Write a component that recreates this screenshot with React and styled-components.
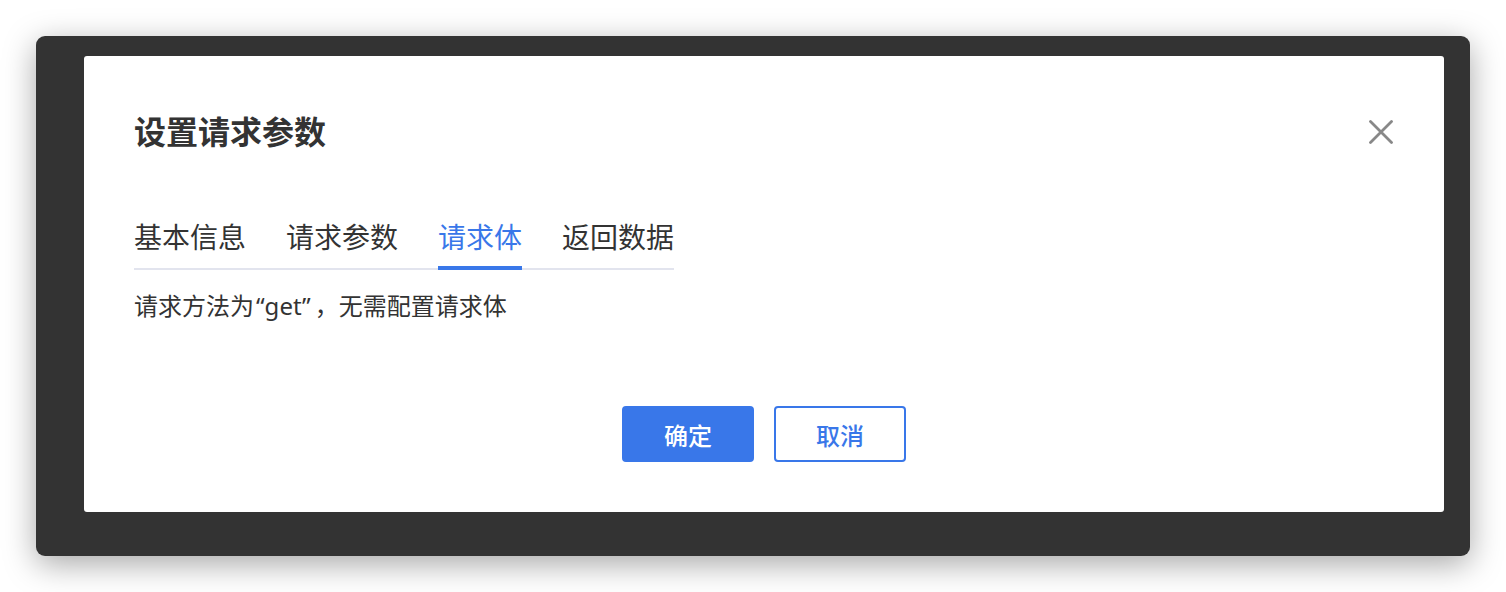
import React, { useState } from 'react'
import styled, { createGlobalStyle } from 'styled-components'

const GlobalStyle = createGlobalStyle`
  html, body {
    margin: 0;
    padding: 0;
    background: #ffffff;
  }
  body {
    font-family: "Noto Sans CJK SC", "Noto Sans", sans-serif;
    color: #333;
  }
`

const tabs = ['基本信息', '请求参数', '请求体', '返回数据']

export default function App() {
  const [active, setActive] = useState(2)

  return (
    <Page>
      <GlobalStyle />
      <WindowFrame>
        <Dialog>
          <Header>
            <Title>设置请求参数</Title>
            <CloseButton aria-label="关闭">
              <svg width="24" height="24" viewBox="0 0 24 24">
                <path d="M1.5 1.5 L22.5 22.5 M22.5 1.5 L1.5 22.5" stroke="#888" strokeWidth="2.8" strokeLinecap="round" />
              </svg>
            </CloseButton>
          </Header>

          <TabList>
            {tabs.map((t, i) => (
              <Tab key={t} $active={i === active} onClick={() => setActive(i)}>
                {t}
              </Tab>
            ))}
          </TabList>

          <Hint>
            请求方法为<Latin>“get”</Latin>，无需配置请求体
          </Hint>

          <Footer>
            <Button $primary>确定</Button>
            <Button>取消</Button>
          </Footer>
        </Dialog>
      </WindowFrame>
    </Page>
  )
}

const Page = styled.div`
  padding: 36px;
  width: 1434px;
`

const WindowFrame = styled.div`
  width: 1434px;
  height: 520px;
  box-sizing: border-box;
  padding: 20px 26px 44px 48px;
  background: #333333;
  border-radius: 9px;
  box-shadow: 0 8px 32px rgba(0, 0, 0, 0.35);
`

const Dialog = styled.div`
  height: 100%;
  box-sizing: border-box;
  background: #fff;
  border-radius: 3px;
  padding: 58px 50px 0;
  display: flex;
  flex-direction: column;
`

const Header = styled.div`
  display: flex;
  align-items: center;
  justify-content: space-between;
`

const Title = styled.h2`
  margin: 0;
  font-size: 32px;
  line-height: 32px;
  font-weight: 700;
  color: #333;
`

const CloseButton = styled.button`
  border: 0;
  background: none;
  padding: 0;
  margin: 3px 1px 0 0;
  width: 24px;
  height: 24px;
  cursor: pointer;
  display: flex;
`

const TabList = styled.div`
  display: inline-flex;
  align-self: flex-start;
  gap: 40px;
  margin-top: 76px;
  border-bottom: 2px solid #e2e4ee;
`

const Tab = styled.div`
  font-size: 28px;
  line-height: 28px;
  padding-bottom: 16px;
  margin-bottom: -2px;
  border-bottom: 4px solid ${p => (p.$active ? '#3977e9' : 'transparent')};
  color: ${p => (p.$active ? '#3977e9' : '#333')};
  cursor: pointer;
`

const Hint = styled.p`
  margin: 23px 0 0;
  height: 24px;
  font-size: 24px;
  line-height: 24px;
  color: #333;
`

const Latin = styled.span`
  font-family: "Noto Sans", "Liberation Sans", sans-serif;
  padding: 0 4px 0 2px;
`

const Footer = styled.div`
  display: flex;
  justify-content: center;
  gap: 20px;
  margin-top: 89px;
`

const Button = styled.button`
  width: 132px;
  height: 56px;
  box-sizing: border-box;
  border-radius: 4px;
  font-family: inherit;
  font-size: 24px;
  font-weight: 500;
  border: 2px solid #3977e9;
  background: ${p => (p.$primary ? '#3977e9' : '#fff')};
  color: ${p => (p.$primary ? '#fff' : '#3977e9')};
  cursor: pointer;
`
